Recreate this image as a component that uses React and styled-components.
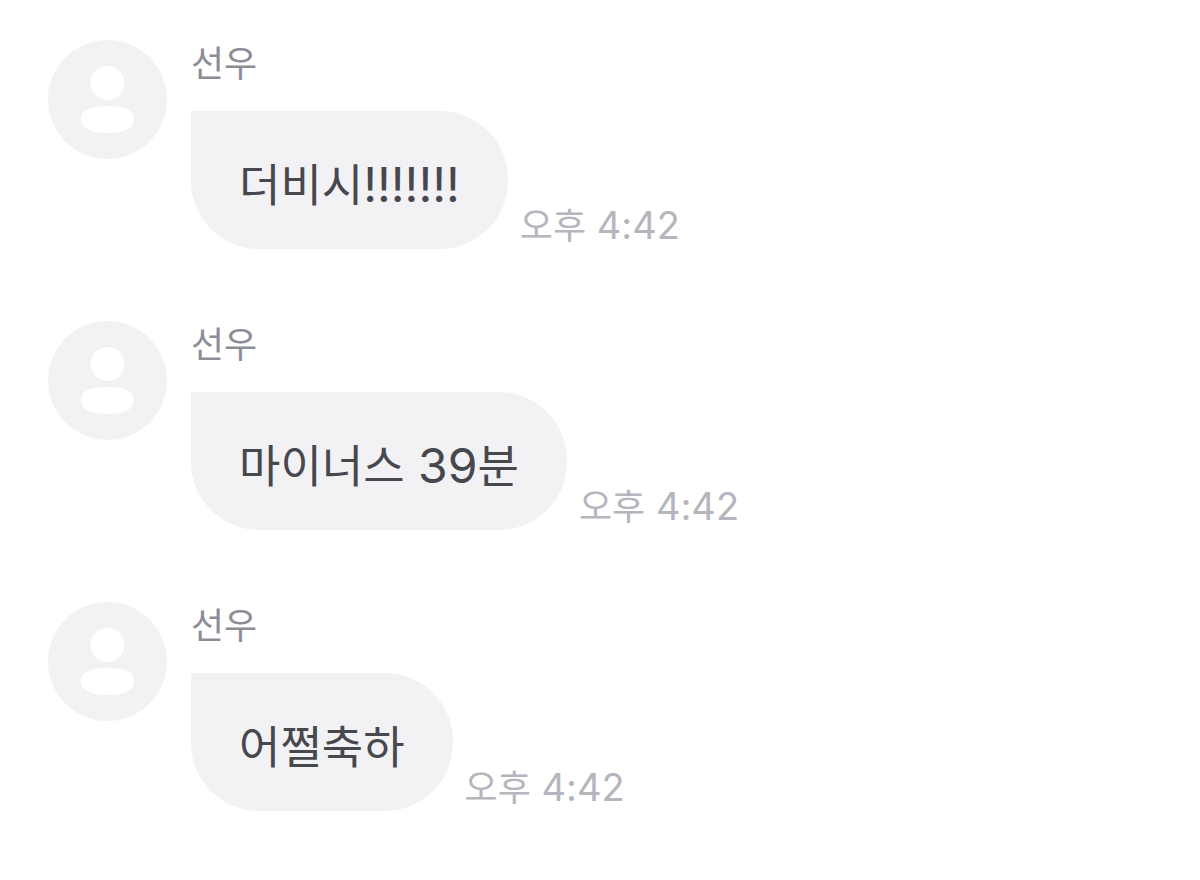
import React from "react";
import styled, { createGlobalStyle } from "styled-components";

const messages = [
  { id: 1, name: "선우", text: "더비시!!!!!!!", time: "오후 4:42" },
  { id: 2, name: "선우", text: "마이너스 39분", time: "오후 4:42" },
  { id: 3, name: "선우", text: "어쩔축하", time: "오후 4:42" },
];

// Latin letters and digits are set a little larger than the Hangul around them
function MixedText({ children }) {
  return children
    .split(/([\x20-\x7e]+)/)
    .map((part, i) => (i % 2 ? <Latin key={i}>{part}</Latin> : part));
}

function App() {
  return (
    <>
      <GlobalStyle />
      <Chat>
        {messages.map((message) => (
          <Message key={message.id}>
            <Avatar>
              <svg viewBox="0 0 119 119" aria-hidden="true">
                <circle cx="59.5" cy="43" r="17" />
                <path d="M33 79C33 69.5 43 66 59.5 66S86 69.5 86 79S76 93 59.5 93S33 88.500 33 79Z" />
              </svg>
            </Avatar>
            <Content>
              <Name>{message.name}</Name>
              <BubbleRow>
                <Bubble>
                  <MixedText>{message.text}</MixedText>
                </Bubble>
                <Time>
                  <MixedText>{message.time}</MixedText>
                </Time>
              </BubbleRow>
            </Content>
          </Message>
        ))}
      </Chat>
    </>
  );
}

export default App;

const GlobalStyle = createGlobalStyle`
  * {
    box-sizing: border-box;
  }

  body {
    margin: 0;
    background: #ffffff;
    font-family: Inter, "Noto Sans CJK KR", sans-serif;
  }
`;

const Chat = styled.ul`
  display: flex;
  flex-direction: column;
  gap: 72px;
  margin: 0;
  padding: 40px 48px;
  list-style: none;
`;

const Message = styled.li`
  display: flex;
  align-items: flex-start;
  gap: 24px;
`;

const Avatar = styled.div`
  flex: none;
  width: 119px;
  height: 119px;
  border-radius: 50%;
  background: #f2f2f5;

  svg {
    display: block;
    fill: #ffffff;
  }
`;

const Content = styled.div`
  display: flex;
  flex-direction: column;
  gap: 22px;
`;

const Name = styled.span`
  color: #8c8d96;
  font-size: 36px;
  line-height: 49px;
`;

const BubbleRow = styled.div`
  display: flex;
  align-items: flex-end;
  gap: 12px;
`;

const Latin = styled.span`
  line-height: 1;
  white-space: pre-wrap;
`;

const Bubble = styled.p`
  margin: 0;
  padding: 45px 48px 33px;
  border-radius: 0 68px 68px 68px;
  background: #f2f2f5;
  color: #47474e;
  font-size: 45px;
  line-height: 60px;

  ${Latin} {
    font-size: 48px;
  }
`;

const Time = styled.time`
  color: #b5b6bd;
  font-size: 36px;
  line-height: 46px;
  white-space: nowrap;

  ${Latin} {
    font-size: 38px;
  }
`;
